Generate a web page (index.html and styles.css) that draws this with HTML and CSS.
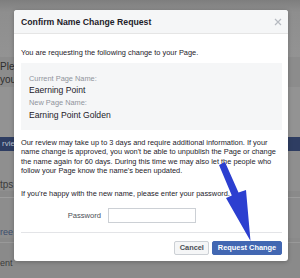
FILE: index.html
```html
<!DOCTYPE html>
<html>
<head>
<meta charset="utf-8">
<link rel="stylesheet" href="styles.css">
</head>
<body>
<div class="bg">
  <div class="bg-top"></div>
  <div class="bg-card">
    <div class="bg-line">Ple</div>
    <div class="bg-line">you</div>
  </div>
  <div class="bg-gap"></div>
  <div class="bg-blue">rvie</div>
  <div class="bg-gap2"></div>
  <div class="bg-text">tps</div>
  <div class="bg-rule"></div>
  <div class="bg-text2">ree</div>
  <div class="bg-rule2"></div>
  <div class="bg-text3">ent</div>
</div>

<div class="dialog">
  <div class="dlg-head">
    <span class="dlg-title">Confirm Name Change Request</span>
    <svg class="dlg-close" width="8" height="8" viewBox="0 0 8 8"><path d="M1 1L7 7M7 1L1 7" stroke="#b6bac1" stroke-width="1.2" fill="none"/></svg>
  </div>
  <div class="dlg-body">
    <p class="intro">You are requesting the following change to your Page.</p>
    <div class="names">
      <div class="lbl">Current Page Name:</div>
      <div class="nm">Eaerning Point</div>
      <div class="lbl lbl2">New Page Name:</div>
      <div class="nm">Earning Point Golden</div>
    </div>
    <p class="para">Our review may take up to 3 days and require additional information. If your<br>name change is approved, you won't be able to unpublish the Page or change<br>the name again for 60 days. During this time we may also let the people who<br>follow your Page know the name's been updated.</p>
    <p class="ask">If you're happy with the new name, please enter your password.</p>
    <div class="pw-row">
      <label class="pw-lbl">Password</label>
      <div class="pw-input"></div>
    </div>
    <div class="sep"></div>
    <div class="btns">
      <button class="btn btn-cancel">Cancel</button>
      <button class="btn btn-primary">Request Change</button>
    </div>
  </div>
</div>

<svg class="arrow" width="300" height="278" viewBox="0 0 300 278">
  <polygon points="219,165 225,162 238.5,192.5 246,190 250.5,241 226,198 231.8,195.5" fill="#2c3fd0"/>
</svg>
</body>
</html>
```
FILE: styles.css
```css
html, body {
  margin: 0;
  padding: 0;
}
body {
  width: 300px;
  height: 278px;
  overflow: hidden;
  background: #8a8a8a;
  font-family: "Liberation Sans", Arial, sans-serif;
  position: relative;
}
.bg {
  display: flex;
  flex-direction: column;
  width: 300px;
}
.bg-top {
  height: 57px;
  background: linear-gradient(#7e7e7e, #8e8e8e 12px, #939393);
}
.bg-card {
  height: 30px;
  background: #8c8c8c;
  padding-top: 3px;
  box-sizing: border-box;
}
.bg-line {
  font-size: 10px;
  line-height: 13px;
  color: #2e2e2e;
  padding-left: 0;
}
.bg-gap {
  height: 50px;
  background: #939393;
}
.bg-blue {
  height: 14px;
  background: #2e3d62;
  color: #b9c0cf;
  font-size: 8px;
  line-height: 14px;
  padding-left: 2px;
}
.bg-gap2 {
  height: 28px;
  background: #8f8f8f;
}
.bg-text {
  height: 12px;
  font-size: 10px;
  line-height: 12px;
  color: #3c3c3c;
  background: #8f8f8f;
}
.bg-rule {
  height: 28px;
  border-top: 1px solid #9d9d9d;
  background: #8d8d8d;
  margin-top: 6px;
}
.bg-text2 {
  font-size: 9px;
  line-height: 12px;
  color: #3c4d6e;
  background: #8d8d8d;
}
.bg-rule2 {
  height: 14px;
  border-top: 1px solid #999;
  background: #8a8a8a;
  margin-top: 4px;
}
.bg-text3 {
  font-size: 9px;
  line-height: 12px;
  color: #3a3a3a;
}

.dialog {
  position: absolute;
  left: 14px;
  top: 10px;
  width: 274px;
  height: 251px;
  background: #fff;
  border-radius: 3px;
  box-shadow: 0 1px 4px rgba(0,0,0,0.25);
  overflow: hidden;
  color: #1d2129;
}
.dlg-head {
  height: 24px;
  background: #f5f6f7;
  border-bottom: 1px solid #e5e5e5;
  box-sizing: border-box;
  display: flex;
  align-items: center;
  justify-content: space-between;
  padding: 0 7px 0 7px;
}
.dlg-title {
  font-weight: bold;
  font-size: 8.7px;
  color: #1d2129;
  padding-top: 1px;
}
.dlg-close {
  display: block;
  margin-right: -1px;
  margin-top: 1px;
}
.dlg-body {
  padding: 0 6px 0 7px;
}
.intro {
  margin: 14px 0 0 0;
  font-size: 7.4px;
  line-height: 9.6px;
}
.names {
  margin-top: 5px;
  background: #f5f6f7;
  height: 67px;
  box-sizing: border-box;
  padding: 11px 8px 0 8px;
}
.lbl {
  font-size: 7.4px;
  line-height: 9.6px;
  color: #90949c;
}
.lbl2 {
  margin-top: 2.7px;
}
.nm {
  font-size: 8.6px;
  line-height: 11px;
  margin-top: 1.6px;
  color: #1d2129;
}
.para {
  margin: 8px 0 0 0;
  font-size: 7.4px;
  line-height: 9.6px;
  white-space: nowrap;
}
.ask {
  margin: 12.6px 0 0 0;
  font-size: 7.4px;
  line-height: 9.6px;
}
.pw-row {
  display: flex;
  align-items: center;
  margin-top: 9.7px;
  height: 15px;
}
.pw-lbl {
  width: 80px;
  text-align: right;
  font-size: 7.6px;
  color: #4b4f56;
}
.pw-input {
  margin-left: 6.7px;
  width: 88px;
  height: 15px;
  box-sizing: border-box;
  border: 1px solid #ccd0d5;
  background: #fff;
}
.sep {
  margin-top: 9px;
  height: 1px;
  background: #e3e4e7;
}
.btns {
  display: flex;
  justify-content: flex-end;
  gap: 2.7px;
  margin-top: 8px;
}
.btn {
  height: 14px;
  box-sizing: border-box;
  font-family: "Liberation Sans", Arial, sans-serif;
  font-weight: bold;
  font-size: 7.4px;
  line-height: 12px;
  border-radius: 2px;
  padding: 0;
  margin: 0;
}
.btn-cancel {
  width: 35px;
  background: #f5f6f7;
  border: 1px solid #ccd0d5;
  color: #4b4f56;
}
.btn-primary {
  width: 70px;
  background: #4267b2;
  border: 1px solid #4267b2;
  color: #fff;
}
.arrow {
  position: absolute;
  left: 0;
  top: 0;
  pointer-events: none;
}
```
